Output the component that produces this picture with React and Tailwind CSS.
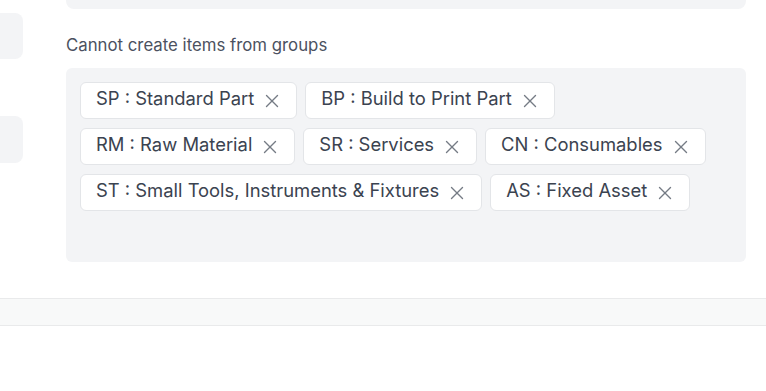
import { X } from 'lucide-react'

const groups = [
  ['SP : Standard Part', 'BP : Build to Print Part'],
  ['RM : Raw Material', 'SR : Services', 'CN : Consumables'],
  ['ST : Small Tools, Instruments & Fixtures', 'AS : Fixed Asset'],
]

function Chip({ label }) {
  return (
    <div className="flex items-center gap-[7px] h-[37px] pl-[15px] pr-[13px] bg-white border border-[#e3e5e8] rounded-[6px] text-[18.4px] text-[#3b4350]">
      <span className="pb-[4px]">{label}</span>
      <X size={22} strokeWidth={1.5} className="text-[#757b85]" />
    </div>
  )
}

export default function App() {
  return (
    <div className="w-[766px] h-[391px] bg-white overflow-hidden" style={{ fontFamily: 'Inter, "Noto Sans", sans-serif' }}>
      <div className="flex h-[298px]">
        <div className="w-[66px] shrink-0 pt-[13px] flex flex-col gap-[57px]">
          <div className="w-[23px] h-[46px] bg-[#f3f4f6] rounded-r-lg" />
          <div className="w-[23px] h-[47px] bg-[#f3f4f6] rounded-r-lg" />
        </div>
        <div className="w-[680px]">
          <div className="h-[9px] bg-[#f3f4f6] rounded-b-lg" />
          <div className="mt-[24px] mb-[11px] text-[16.8px] leading-[24px] text-[#4b5160]">Cannot create items from groups</div>
          <div className="h-[194px] bg-[#f3f4f6] rounded-[6px] px-[14px] pt-[14px] flex flex-col gap-[9px]">
            {groups.map((row, i) => (
              <div key={i} className="flex gap-[8px]">
                {row.map((g) => (
                  <Chip key={g} label={g} />
                ))}
              </div>
            ))}
          </div>
        </div>
      </div>
      <div className="h-[28px] bg-[#f8f9f9] border-y border-[#e9eaeb]" />
    </div>
  )
}
